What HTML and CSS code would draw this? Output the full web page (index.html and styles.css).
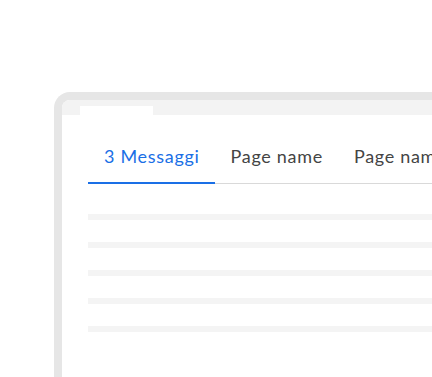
FILE: index.html
```html
<!DOCTYPE html>
<html lang="it">
<head>
  <meta charset="UTF-8" />
  <meta name="viewport" content="width=device-width, initial-scale=1.0"/>
  <title>Messaggi</title>
  <link rel="stylesheet" href="styles.css">
</head>
<body>
  <div class="finestra">
    <div class="barra-top">
      <div class="tab-browser"></div>
    </div>
    <div class="contenuto">
      <nav class="tabs">
        <a href="#" class="tab attivo">3 Messaggi</a>
        <a href="#" class="tab">Page name</a>
        <a href="#" class="tab">Page name</a>
      </nav>
      <div class="righe">
        <div class="riga"></div>
        <div class="riga"></div>
        <div class="riga"></div>
        <div class="riga"></div>
        <div class="riga"></div>
      </div>
    </div>
  </div>
</body>
</html>
```

FILE: styles.css
```css
body {
  margin: 0;
  padding: 0;
  background: #ffffff;
  font-family: 'Lato', 'Open Sans', sans-serif;
  overflow: hidden;
}

.finestra {
  margin: 92px 0 0 54px;
  width: 460px;
  height: 320px;
  border: 8px solid #e6e6e6;
  border-right: none;
  border-bottom: none;
  border-radius: 16px 0 0 0;
  background: #ffffff;
}

.barra-top {
  height: 15px;
  background: #f3f3f3;
  display: flex;
  align-items: flex-end;
  border-radius: 8px 0 0 0;
}

.tab-browser {
  margin-left: 18px;
  width: 73px;
  height: 9px;
  background: #ffffff;
}

.contenuto {
  padding: 29px 0 0 26px;
}

.tabs {
  display: flex;
  border-bottom: 1px solid #d9d9d9;
  white-space: nowrap;
}

.tab {
  display: block;
  padding: 0 15px 14px 16px;
  font-size: 18px;
  line-height: 24px;
  letter-spacing: 0.7px;
  color: #444444;
  text-decoration: none;
  border-bottom: 2px solid transparent;
  margin-bottom: -1px;
}

.tab.attivo {
  color: #1a6fe6;
  border-bottom-color: #1a6fe6;
}

.righe {
  display: flex;
  flex-direction: column;
  gap: 22px;
  padding-top: 30px;
}

.riga {
  height: 6px;
  background: #f4f4f4;
}
```
